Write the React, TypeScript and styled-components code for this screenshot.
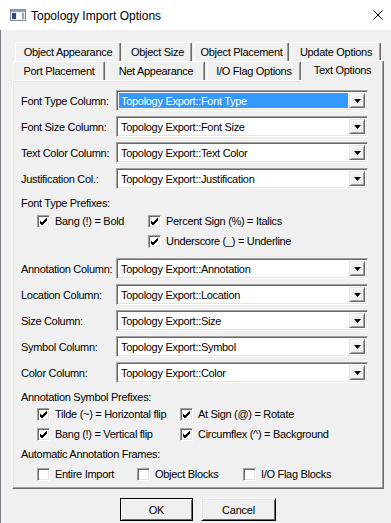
import React from "react";
import styled, { createGlobalStyle } from "styled-components";

const GlobalStyle = createGlobalStyle`
  html, body {
    margin: 0;
    padding: 0;
    background: #f0f0f0;
  }
  body {
    font-family: "Liberation Sans", Arial, sans-serif;
    font-size: 11px;
    color: #000;
  }
`;

const Window = styled.div`
  width: 391px;
  height: 523px;
  display: flex;
  flex-direction: column;
  background: #f0f0f0;
  overflow: hidden;
`;

const TitleBar = styled.div`
  height: 30px;
  flex: none;
  background: #ffffff;
  display: flex;
  align-items: center;
  padding-left: 10px;
  gap: 5px;
`;

const Title = styled.span`
  font-size: 12px;
  flex: 1;
  padding-top: 1px;
`;

const CloseBox = styled.div`
  width: 30px;
  height: 30px;
  display: flex;
  align-items: center;
  justify-content: center;
  margin-right: -2px;
`;

const Body = styled.div`
  flex: 1;
  border-left: 1px solid #7d7d85;
  padding: 13px 0 0 11px;
  display: flex;
  flex-direction: column;
`;

const TabStrip = styled.div`
  display: flex;
  flex-direction: column;
  width: 372px;
`;

const TabRow = styled.div<{ $indent: number }>`
  display: flex;
  align-items: flex-end;
  gap: 2px;
  padding-left: ${(p) => p.$indent}px;
  height: ${(p) => (p.$indent > 2 ? 18 : 19)}px;
`;

const Tab = styled.div<{ $w: number; $active?: boolean }>`
  box-sizing: border-box;
  width: ${(p) => p.$w}px;
  height: ${(p) => (p.$active ? 22 : 19)}px;
  margin-left: ${(p) => (p.$active ? -2 : 0)}px;
  margin-bottom: ${(p) => (p.$active ? -2 : 0)}px;
  position: relative;
  z-index: ${(p) => (p.$active ? 2 : 1)};
  background: #f0f0f0;
  border-top: 1px solid #ffffff;
  border-left: 1px solid #ffffff;
  border-right: 1px solid #696969;
  border-radius: 2px 2px 0 0;
  box-shadow: inset -1px 0 0 #a0a0a0;
  display: flex;
  align-items: ${(p) => (p.$active ? "flex-start" : "center")};
  padding-top: ${(p) => (p.$active ? 3 : 0)}px;
  justify-content: center;
  letter-spacing: -0.3px;
  white-space: nowrap;
`;

const Panel = styled.div`
  box-sizing: border-box;
  width: 372px;
  height: 409px;
  border-top: 1px solid #ffffff;
  border-left: 1px solid #ffffff;
  border-right: 1px solid #696969;
  border-bottom: 1px solid #696969;
  box-shadow: inset -1px -1px 0 #a0a0a0, inset 1px 1px 0 #e3e3e3;
  padding: 9px 0 0 8px;
  display: flex;
  flex-direction: column;
`;

const FieldGroup = styled.div<{ $top?: number }>`
  display: flex;
  flex-direction: column;
  gap: 5px;
  margin-top: ${(p) => p.$top ?? 0}px;
`;

const FieldRow = styled.div`
  display: flex;
  align-items: center;
  height: 21px;
`;

const Label = styled.span`
  width: 95px;
  flex: none;
  letter-spacing: -0.3px;
  white-space: nowrap;
`;

const Combo = styled.div`
  box-sizing: border-box;
  width: 252px;
  height: 21px;
  background: #ffffff;
  border-top: 1px solid #a0a0a0;
  border-left: 1px solid #a0a0a0;
  border-right: 1px solid #ffffff;
  border-bottom: 1px solid #ffffff;
  box-shadow: inset 1px 1px 0 #696969, inset -1px -1px 0 #e3e3e3;
  padding: 2px 2px 2px 2px;
  display: flex;
  align-items: stretch;
`;

const ComboText = styled.div<{ $selected?: boolean }>`
  flex: 1;
  display: flex;
  align-items: center;
  padding-left: 2px;
  margin-right: 1px;
  background: ${(p) => (p.$selected ? "#3399ff" : "transparent")};
  color: ${(p) => (p.$selected ? "#ffffff" : "#000000")};
  letter-spacing: -0.3px;
  white-space: nowrap;
`;

const ArrowButton = styled.div`
  box-sizing: border-box;
  width: 16px;
  flex: none;
  background: #f0f0f0;
  border-top: 1px solid #e3e3e3;
  border-left: 1px solid #e3e3e3;
  border-right: 1px solid #696969;
  border-bottom: 1px solid #696969;
  box-shadow: inset 1px 1px 0 #ffffff, inset -1px -1px 0 #a0a0a0;
  display: flex;
  align-items: center;
  justify-content: center;
`;

const SectionLabel = styled.div<{ $top: number }>`
  margin-top: ${(p) => p.$top}px;
  height: 16px;
  line-height: 16px;
  letter-spacing: -0.3px;
`;

const CheckRow = styled.div<{ $indent?: number; $top?: number }>`
  display: flex;
  align-items: center;
  height: 18px;
  margin-top: ${(p) => p.$top ?? 0}px;
  padding-left: ${(p) => 16 + (p.$indent ?? 0)}px;
`;

const CheckItem = styled.label<{ $w?: number }>`
  display: flex;
  align-items: center;
  gap: 5px;
  width: ${(p) => (p.$w ? `${p.$w}px` : "auto")};
  flex: none;
  letter-spacing: -0.3px;
  white-space: nowrap;
`;

const Box = styled.span`
  box-sizing: border-box;
  width: 13px;
  height: 13px;
  flex: none;
  background: #ffffff;
  border-top: 1px solid #a0a0a0;
  border-left: 1px solid #a0a0a0;
  border-right: 1px solid #ffffff;
  border-bottom: 1px solid #ffffff;
  box-shadow: inset 1px 1px 0 #696969, inset -1px -1px 0 #e3e3e3;
  display: flex;
  align-items: center;
  justify-content: center;
`;

const ButtonRow = styled.div`
  display: flex;
  gap: 8px;
  margin: 9px 0 0 108px;
`;

const Button = styled.div<{ $default?: boolean; $w: number }>`
  box-sizing: border-box;
  width: ${(p) => p.$w}px;
  height: 23px;
  background: #f0f0f0;
  border: 1px solid ${(p) => (p.$default ? "#000000" : "#ffffff")};
  border-right-color: #000000;
  border-bottom-color: #000000;
  box-shadow: ${(p) =>
    p.$default
      ? "inset 1px 1px 0 #ffffff, inset -1px -1px 0 #696969"
      : "inset 1px 1px 0 #e3e3e3, inset -1px -1px 0 #696969"};
  display: flex;
  align-items: center;
  justify-content: center;
  letter-spacing: -0.2px;
`;

const Check = () => (
  <svg width="9" height="9" viewBox="0 0 9 9">
    <path d="M1 4 L3 6 L8 1 M1 5 L3 7 L8 2 M1 6 L3 8 L8 3" stroke="#000" strokeWidth="1" fill="none" />
  </svg>
);

const CheckBox: React.FC<{ label: string; checked?: boolean; w?: number }> = ({ label, checked, w }) => (
  <CheckItem $w={w}>
    <Box>{checked && <Check />}</Box>
    {label}
  </CheckItem>
);

const DownArrow = () => (
  <svg width="7" height="4" viewBox="0 0 7 4">
    <path d="M0 0 H7 L3.5 4 Z" fill="#000" />
  </svg>
);

const Field: React.FC<{ label: string; value: string; selected?: boolean }> = ({ label, value, selected }) => (
  <FieldRow>
    <Label>{label}</Label>
    <Combo>
      <ComboText $selected={selected}>Topology Export::{value}</ComboText>
      <ArrowButton>
        <DownArrow />
      </ArrowButton>
    </Combo>
  </FieldRow>
);

const AppIcon = () => (
  <svg width="16" height="12" viewBox="0 0 16 12">
    <rect x="0.5" y="0.5" width="15" height="11" fill="#e8ecf0" stroke="#7f8a96" />
    <rect x="1" y="1" width="14" height="2" fill="#8fa3b8" />
    <rect x="2" y="4" width="4" height="6" fill="#2e4c6d" />
    <rect x="7" y="4" width="7" height="6" fill="#ffffff" />
    <rect x="12" y="4" width="2" height="6" fill="#9aa8b6" />
  </svg>
);

const CloseIcon = () => (
  <svg width="10" height="10" viewBox="0 0 10 10">
    <path d="M0.5 0.5 L9.5 9.5 M9.5 0.5 L0.5 9.5" stroke="#000" strokeWidth="1" />
  </svg>
);

const App: React.FC = () => {
  return (
    <Window>
      <GlobalStyle />
      <TitleBar>
        <AppIcon />
        <Title>Topology Import Options</Title>
        <CloseBox>
          <CloseIcon />
        </CloseBox>
      </TitleBar>
      <Body>
        <TabStrip>
          <TabRow $indent={3}>
            <Tab $w={106}>Object Appearance</Tab>
            <Tab $w={69}>Object Size</Tab>
            <Tab $w={95}>Object Placement</Tab>
            <Tab $w={90}>Update Options</Tab>
          </TabRow>
          <TabRow $indent={1}>
            <Tab $w={92}>Port Placement</Tab>
            <Tab $w={98}>Net Appearance</Tab>
            <Tab $w={94}>I/O Flag Options</Tab>
            <Tab $w={83} $active>
              Text Options
            </Tab>
          </TabRow>
        </TabStrip>
        <Panel>
          <FieldGroup>
            <Field label="Font Type Column:" value="Font Type" selected />
            <Field label="Font Size Column:" value="Font Size" />
            <Field label="Text Color Column:" value="Text Color" />
            <Field label="Justification Col.:" value="Justification" />
          </FieldGroup>
          <SectionLabel $top={6}>Font Type Prefixes:</SectionLabel>
          <CheckRow $top={1}>
            <CheckBox label="Bang (!) = Bold" checked w={111} />
            <CheckBox label="Percent Sign (%) = Italics" checked />
          </CheckRow>
          <CheckRow $indent={111} $top={2}>
            <CheckBox label="Underscore (_) = Underline" checked />
          </CheckRow>
          <FieldGroup $top={8}>
            <Field label="Annotation Column:" value="Annotation" />
            <Field label="Location Column:" value="Location" />
            <Field label="Size Column:" value="Size" />
            <Field label="Symbol Column:" value="Symbol" />
            <Field label="Color Column:" value="Color" />
          </FieldGroup>
          <SectionLabel $top={6}>Annotation Symbol Prefixes:</SectionLabel>
          <CheckRow>
            <CheckBox label="Tilde (~) = Horizontal flip" checked w={143} />
            <CheckBox label="At Sign (@) = Rotate" checked />
          </CheckRow>
          <CheckRow $top={2}>
            <CheckBox label="Bang (!) = Vertical flip" checked w={143} />
            <CheckBox label="Circumflex (^) = Background" checked />
          </CheckRow>
          <SectionLabel $top={3}>Automatic Annotation Frames:</SectionLabel>
          <CheckRow $top={3}>
            <CheckBox label="Entire Import" w={100} />
            <CheckBox label="Object Blocks" w={106} />
            <CheckBox label="I/O Flag Blocks" />
          </CheckRow>
        </Panel>
        <ButtonRow>
          <Button $default $w={73}>
            OK
          </Button>
          <Button $w={75}>Cancel</Button>
        </ButtonRow>
      </Body>
    </Window>
  );
};

export default App;
